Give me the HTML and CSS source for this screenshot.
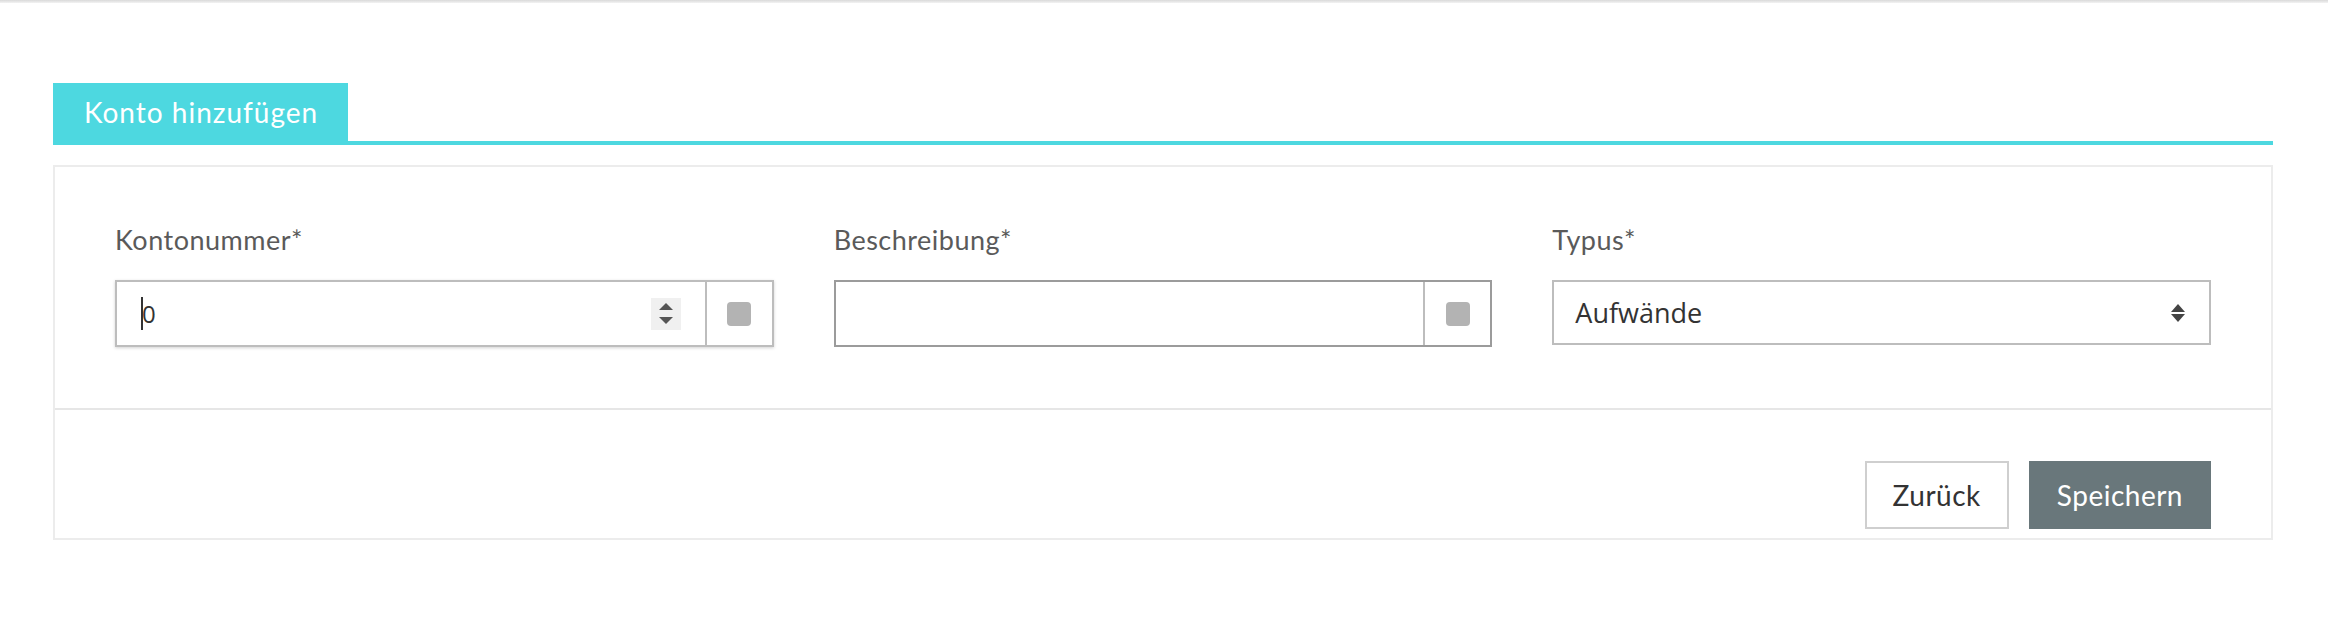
FILE: index.html
```html
<!DOCTYPE html>
<html lang="de">
<head>
  <meta charset="UTF-8">
  <meta name="viewport" content="width=device-width, initial-scale=1.0">
  <title>Konto hinzufügen</title>
  <link rel="stylesheet" href="styles.css">
</head>
<body>
  <div class="topbar"></div>

  <div class="page">
    <div class="tabs">
      <div class="tab">Konto hinzufügen</div>
    </div>

    <div class="panel">
      <div class="panel-body">
        <div class="field">
          <label for="nummer">Kontonummer*</label>
          <div class="input-group shadowed">
            <div class="control">
              <span class="caret"></span>
              <input type="text" id="nummer" value="0">
              <span class="spinner">
                <svg width="30" height="32" viewBox="0 0 30 32">
                  <rect width="30" height="32" fill="#f0f0f0"/>
                  <polygon points="8,12 15,5 22,12" fill="#555"/>
                  <polygon points="8,19 22,19 15,26" fill="#555"/>
                </svg>
              </span>
            </div>
            <span class="addon"><span class="square"></span></span>
          </div>
        </div>

        <div class="field">
          <label for="beschreibung">Beschreibung*</label>
          <div class="input-group dark">
            <div class="control">
              <input type="text" id="beschreibung" value="">
            </div>
            <span class="addon"><span class="square"></span></span>
          </div>
        </div>

        <div class="field">
          <label for="typus">Typus*</label>
          <div class="select">
            <span class="select-value">Aufwände</span>
            <svg width="16" height="20" viewBox="0 0 16 20">
              <polygon points="1,9 8,1 15,9" fill="#444"/>
              <polygon points="1,11 15,11 8,19" fill="#444"/>
            </svg>
          </div>
        </div>
      </div>

      <div class="panel-footer">
        <button class="btn">Zurück</button>
        <button class="btn btn-primary">Speichern</button>
      </div>
    </div>
  </div>
</body>
</html>
```

FILE: styles.css
```css
body{
  margin: 0;
  background-color: #fff;
  font-family: Lato, "Open Sans", sans-serif;
}
.topbar{
  height: 3px;
  background: linear-gradient(#d9d9d9, #f3f3f3);
}
.page{
  padding: 80px 55px 0 53px;
}
.tabs{
  display: flex;
  border-bottom: 4px solid #4dd8e0;
}
.tab{
  background-color: #4dd8e0;
  color: #fff;
  font-size: 28px;
  line-height: 34px;
  letter-spacing: 1px;
  padding: 12px 30px 12px 31px;
}
.panel{
  margin-top: 20px;
  border: 2px solid #ececec;
}
.panel-body{
  display: grid;
  grid-template-columns: 1fr 1fr 1fr;
  gap: 60px;
  padding: 57px 60px 61px;
}
.field label{
  display: block;
  color: #5a5a5a;
  font-size: 27px;
  line-height: 32px;
  letter-spacing: 0.5px;
  margin-bottom: 24px;
}
.input-group{
  display: flex;
  height: 67px;
  box-sizing: border-box;
  border: 2px solid #bdbdbd;
}
.input-group.shadowed{
  box-shadow: 0 1px 3px rgba(0,0,0,0.18);
}
.input-group.dark{
  border-color: #9b9b9b;
}
.control{
  flex: 1;
  display: flex;
  align-items: center;
  position: relative;
}
.control input{
  flex: 1;
  min-width: 0;
  border: none;
  outline: none;
  padding: 0 0 0 25px;
  font-family: "Open Sans", sans-serif;
  font-size: 24px;
  color: #333;
  background: transparent;
}
.caret{
  position: absolute;
  left: 24px;
  top: 15px;
  width: 2px;
  height: 33px;
  background-color: #333;
}
.spinner{
  display: flex;
  margin-right: 24px;
}
.addon{
  width: 65px;
  border-left: 2px solid #bdbdbd;
  display: flex;
  align-items: center;
  justify-content: center;
}
.square{
  width: 24px;
  height: 24px;
  border-radius: 4px;
  background-color: #b3b3b3;
}
.select{
  display: flex;
  align-items: center;
  justify-content: space-between;
  height: 65px;
  box-sizing: border-box;
  border: 2px solid #bdbdbd;
  padding: 0 23px 0 21px;
}
.select-value{
  font-family: "Open Sans", sans-serif;
  font-size: 27px;
  color: #333;
}
.panel-footer{
  display: flex;
  justify-content: flex-end;
  gap: 20px;
  border-top: 2px solid #e6e6e6;
  padding: 51px 60px 9px;
}
.btn{
  height: 68px;
  padding: 0 26px;
  border: 2px solid #cfcfcf;
  background-color: #fff;
  color: #333;
  font-family: Lato, sans-serif;
  font-size: 28px;
  letter-spacing: 0.5px;
  cursor: pointer;
}
.btn-primary{
  background-color: #69777b;
  border-color: #69777b;
  color: #fff;
}
```
